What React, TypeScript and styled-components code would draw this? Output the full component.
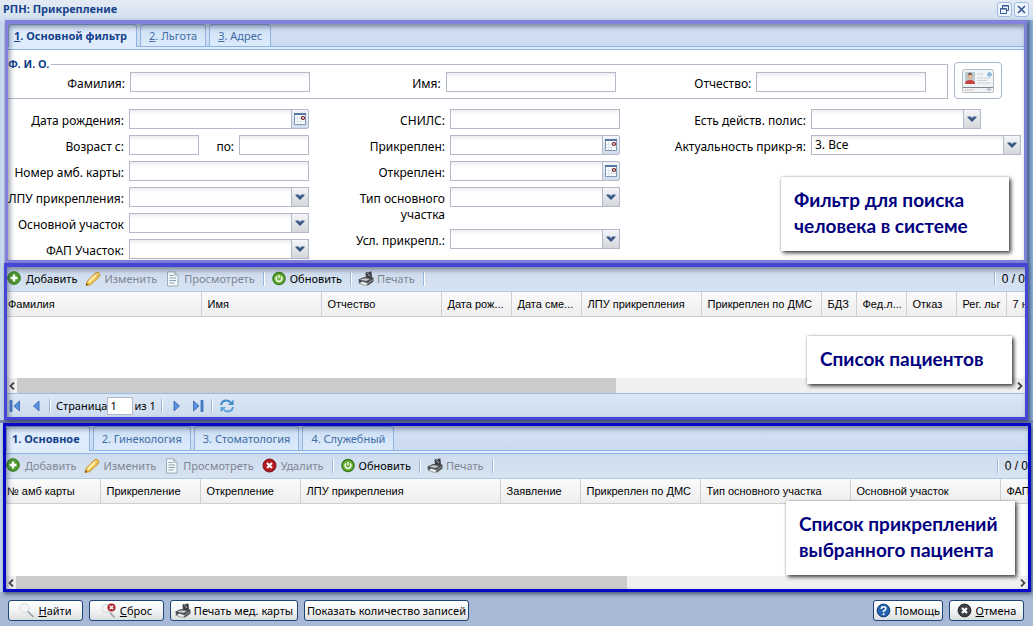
import React, { useId } from 'react';
import styled, { createGlobalStyle } from 'styled-components';

const ui = '"Noto Sans", "DejaVu Sans", sans-serif';
const gridFont = '"Liberation Sans", Arial, sans-serif';

const Global = createGlobalStyle`
  * { box-sizing: border-box; }
  body { margin: 0; font: 11px/16px ${ui}; color: #000; background: #a7b9d6; }
  button, input, select { font: inherit; color: inherit; margin: 0; }
`;

const Window = styled.div`
  min-height: 100vh;
  display: flex;
  flex-direction: column;
  overflow: hidden;
  background: linear-gradient(90deg, #bdd3f0 0, #dbe7f6 4px, #8ea6cc 6px, #8ea6cc calc(100% - 8px), #6f92be calc(100% - 4px), #8fb3dc 100%);
`;

const TitleBar = styled.header`
  height: 20px;
  padding: 0 4px 2px 3px;
  display: flex;
  align-items: center;
  justify-content: space-between;
  background: linear-gradient(#e3eaf4, #dce6f1 50%, #cfdff1);
`;
const Title = styled.h1`
  margin: 0;
  font-size: 11px;
  line-height: 16px;
  font-weight: 700;
  color: #15428b;
`;
const Tools = styled.div`
  display: flex;
  gap: 2px;
`;
const ToolButton = styled.button`
  width: 15px;
  height: 15px;
  padding: 0;
  display: grid;
  place-items: center;
  border: 1px solid #9ebce4;
  border-radius: 3px;
  background: #eef4fc;
`;

const Frame = styled.section<{ $color: string; $left: number; $right: number; $top: number; $grow?: number; $base?: number }>`
  position: relative;
  z-index: 1;
  margin: 0 ${p => p.$right}px 0 ${p => p.$left}px;
  border: 3px solid ${p => p.$color};
  border-top-width: ${p => p.$top}px;
  box-shadow: 1px 2px 4px rgba(30, 40, 70, 0.7);
  background: #fff;
  display: flex;
  flex-direction: column;
  flex: ${p => (p.$grow ? `${p.$grow} 0 ${p.$base}px` : '0 0 auto')};
  &::after {
    content: '';
    position: absolute;
    inset: 0;
    pointer-events: none;
    box-shadow: inset 2px 3px 5px rgba(40, 50, 80, 0.5);
  }
`;
const Gap = styled.div`
  height: 3px;
  background: #7686b4;
`;

const TabStrip = styled.div<{ $h: number }>`
  height: ${p => p.$h}px;
  display: flex;
  gap: 3px;
  align-items: stretch;
  background: linear-gradient(#d5e1f3, #cbdbef);
`;
const Tab = styled.button<{ $active?: boolean }>`
  position: relative;
  border: 1px solid #8db2e3;
  border-bottom: 0;
  border-radius: 4px 4px 0 0;
  background: ${p => (p.$active ? '#deecfd' : 'linear-gradient(#cfe0f5, #dcebfc)')};
  color: ${p => (p.$active ? '#15428b' : '#416da3')};
  font-weight: ${p => (p.$active ? 700 : 400)};
  padding: 0 ${p => (p.$active ? '9px 0 5px' : '8px')};
  margin-bottom: ${p => (p.$active ? '-1px' : '0')};
`;
const TabBase = styled.div`
  height: 4px;
  border: 1px solid #8db2e3;
  border-width: 1px 0;
  background: #deecfd;
`;

const Form = styled.form`
  padding: 7px 0 1px;
`;
const NameRow = styled.div`
  display: flex;
  gap: 6px;
  padding-right: 22px;
`;
const NameSet = styled.fieldset`
  flex: 1;
  min-width: 0;
  margin: 0;
  padding: 1px 0 6px;
  border: 1px solid #b5b8c8;
  border-left: 0;
`;
const Legend = styled.legend`
  padding: 0 2px 0 0;
  line-height: 14px;
  font-weight: 700;
  color: #15428b;
`;
const NameGrid = styled.div`
  display: grid;
  grid-template-columns: 322fr 310fr 308fr;
`;
const CardButton = styled.button`
  width: 48px;
  height: 37px;
  margin-top: 5px;
  padding: 0;
  display: grid;
  place-items: center;
  border: 1px solid #a9b8cc;
  border-radius: 4px;
  background: #fff;
`;
const FilterGrid = styled.div`
  display: grid;
  grid-template-columns: 322fr 310fr 384fr;
  padding-top: 10px;
`;
const FieldColumn = styled.div`
  display: flex;
  flex-direction: column;
  gap: 6px;
`;
const FieldRow = styled.div`
  display: flex;
  gap: 5px;
  align-items: flex-start;
`;
const Label = styled.label<{ $w: number }>`
  flex: 0 0 ${p => p.$w}px;
  padding-top: 4px;
  margin-bottom: -4px;
  font-size: 12px;
  line-height: 16px;
  text-align: right;
`;
const TallLabel = styled(Label)`
  margin-bottom: 0;
  padding-left: 20px;
`;
const Control = styled.div<{ $w: number }>`
  flex: 0 1 ${p => p.$w}px;
  min-width: 0;
  height: 20px;
  display: flex;
  position: relative;
`;
const fieldLook = `
  width: 100%;
  min-width: 0;
  height: 20px;
  padding: 0 3px;
  border: 1px solid #b5b8c8;
  border-radius: 0;
  background: linear-gradient(#eeeeee, #ffffff 5px);
  font-size: 12px;
  outline: 0;
`;
const Input = styled.input`${fieldLook}`;
const SelectBox = styled.select`
  ${fieldLook}
  appearance: none;
`;
const Trigger = styled.span`
  position: absolute;
  right: 0;
  top: 0;
  width: 18px;
  height: 20px;
  display: grid;
  place-items: center;
  border: 1px solid #b5b8c8;
  border-radius: 0 2px 2px 0;
  background: linear-gradient(#f4f6f9, #d3d6da);
  pointer-events: none;
`;
const DateButton = styled.button`
  flex: 0 0 18px;
  height: 20px;
  margin-left: -1px;
  padding: 0;
  display: grid;
  place-items: center;
  border: 1px solid #b5b8c8;
  border-radius: 0 2px 2px 0;
  background: linear-gradient(#f2f5fa, #cfdcec);
`;
const AgeFields = styled.div`
  width: 180px;
  display: grid;
  grid-template-columns: 70px 1fr 70px;
  column-gap: 5px;
`;
const AgeLabel = styled.label`
  padding-top: 4px;
  margin-bottom: -4px;
  font-size: 12px;
  line-height: 16px;
  text-align: right;
`;

const Toolbar = styled.div`
  height: 25px;
  display: flex;
  align-items: center;
  background: linear-gradient(#cfdcee, #d5e3f2);
  border-bottom: 1px solid #b4c8e2;
`;
const ToolItem = styled.button`
  display: flex;
  align-items: center;
  gap: 3px;
  margin-right: 8px;
  padding: 0;
  border: 0;
  background: none;
  white-space: nowrap;
  &:disabled { color: #808692; }
`;
const Separator = styled.span`
  width: 2px;
  height: 14px;
  margin-right: 6px;
  border-left: 1px solid #98b6dc;
  border-right: 1px solid #fff;
`;
const Counter = styled.span`
  margin-left: auto;
  display: flex;
  align-items: center;
  white-space: nowrap;
  font: 12px/16px ${gridFont};
`;

const GridBody = styled.div`
  flex: 1 0 60px;
  overflow: hidden;
`;
const Table = styled.table`
  table-layout: fixed;
  width: 100%;
  min-width: 1200px;
  border-collapse: collapse;
  font: 11px/16px ${gridFont};
`;
const Head = styled.th<{ $w?: number }>`
  width: ${p => (p.$w ? `${p.$w}px` : 'auto')};
  height: 24px;
  padding: 0 0 0 6px;
  overflow: hidden;
  white-space: nowrap;
  text-align: left;
  font-weight: 400;
  background: linear-gradient(#fafafa, #eeeeef);
  border-right: 1px solid #cfd0d4;
  border-bottom: 1px solid #d0d0d0;
  &:first-child { padding-left: 1px; }
`;
const ScrollBar = styled.div<{ $h: number }>`
  height: ${p => p.$h}px;
  display: flex;
  align-items: stretch;
  background: #f0f0f1;
`;
const ScrollButton = styled.button`
  width: 10px;
  padding: 0;
  border: 0;
  background: none;
  display: grid;
  place-items: center;
`;
const Track = styled.div`
  flex: 1;
`;
const Thumb = styled.div<{ $size: number }>`
  width: ${p => p.$size}%;
  height: 100%;
  background: #cbcbcc;
`;
const Paging = styled.nav`
  height: 24px;
  display: flex;
  align-items: center;
  border-top: 1px solid #99bbe8;
  background: linear-gradient(#dce7f4, #cddcee);
`;
const PageButton = styled.button`
  width: 16px;
  height: 16px;
  margin-right: 5px;
  padding: 0;
  border: 0;
  background: none;
  display: grid;
  place-items: center;
`;
const PageText = styled.label`
  margin-left: -1px;
`;
const PageInput = styled.input`
  width: 26px;
  height: 18px;
  padding: 0 2px;
  border: 1px solid #b5b8c8;
  background: #fff;
`;
const PageTotal = styled.span`
  padding: 0 5px 0 1px;
`;

const Footer = styled.footer`
  height: 34px;
  padding: 8px 9px 4px 8px;
  display: flex;
  gap: 6px;
  background: #a7b9d6;
`;
const Action = styled.button<{ $w: number; $push?: boolean }>`
  min-width: ${p => p.$w}px;
  height: 21px;
  padding: 0 2px;
  margin-left: ${p => (p.$push ? 'auto' : '0')};
  display: flex;
  align-items: center;
  justify-content: center;
  gap: 3px;
  border: 1px solid #1d4576;
  border-radius: 3px;
  background: linear-gradient(#ffffff, #f3f4f5 50%, #dcdee1);
  white-space: nowrap;
`;

const Callout = styled.aside<{ $top: number; $right: number; $w: number }>`
  position: absolute;
  z-index: 3;
  top: ${p => p.$top}px;
  right: ${p => p.$right}px;
  width: ${p => p.$w}px;
  padding: 10px 0 12px 13px;
  background: #fff;
  box-shadow: 2px 2px 4px rgba(0, 0, 0, 0.75), 0 0 2px rgba(0, 0, 0, 0.25);
  color: #00007f;
  font-family: Lato, "Noto Sans", sans-serif;
  font-size: 19px;
  line-height: 26px;
  font-weight: 700;
  white-space: nowrap;
`;

/* ---------- icons ---------- */
const AddIcon = () => (
  <svg width="16" height="16" viewBox="0 0 16 16"><circle cx="7" cy="7" r="6.3" fill="#4e9a2c" stroke="#35761c" /><path d="M7 3.5v7M3.5 7h7" stroke="#fff" strokeWidth="2.4" /></svg>
);
const PencilIcon = () => (
  <svg width="16" height="16" viewBox="0 0 16 16"><path d="M1 14.5 2.3 10.200 10.300 2q1.900-1.700 3.700.1t.2 3.600L5.600 13.600Z" fill="#f6c94f" stroke="#c58a2b" /><path d="m4 11 8-8" stroke="#fff0b8" strokeWidth="2" /><path d="m10 2.6 3.4 3.3" stroke="#d79a62" /><path d="m1 14.500.7-2.300 1.700 1.600Z" fill="#6b4c1c" /></svg>
);
const DocIcon = () => (
  <svg width="16" height="16" viewBox="0 0 16 16"><path d="M2.500.8h7.300L13 4v11H2.500Z" fill="#f2f7fa" stroke="#9aaebc" /><path d="M9.800.8V4H13" fill="#c8d8e2" stroke="#9aaebc" /><path d="M4.500 4.500h4M4.500 7h6.500M4.500 9.500h6.500M4.500 12h5" stroke="#87a2b3" /></svg>
);
const RefreshIcon = () => (
  <svg width="16" height="16" viewBox="0 0 16 16"><circle cx="8" cy="7.500" r="6" fill="#6db33a" stroke="#397a1c" strokeWidth="1.500" /><path d="M6 5.500a2.800 2.800 0 1 0 4 0M8 4v3" fill="none" stroke="#fff" strokeWidth="1.300" /></svg>
);
const DeleteIcon = () => (
  <svg width="16" height="16" viewBox="0 0 16 16"><circle cx="7.500" cy="7.500" r="6.500" fill="#b3191e" stroke="#7d1014" /><path d="m5 5 5 5m0-5-5 5" stroke="#fff" strokeWidth="2.200" /></svg>
);
const PrinterIcon = () => (
  <svg width="16" height="16" viewBox="0 0 16 16"><path d="M7.500 1.500 9.500 1l.5 1 1-1.300L13.500.5 14 7 8 8Z" fill="#3e4146" /><path d="M9.500 2.500 12 5" stroke="#b9bcc0" /><path d="M.5 8.500 6 6l9.500.5v4L10 14.500 1 12Z" fill="#484b4f" /><path d="M2 8.800 6 7.300l6 .7-3.500 2.100Z" fill="#c9cbce" /><path d="m.8 12.200 6.700 2.300 3-2.100-6-1.900Z" fill="#f4f4f4" stroke="#77797c" strokeWidth=".7" /><path d="M10.500 11.500 14.500 9" stroke="#a1a4a8" /></svg>
);
const SearchIcon = () => (
  <svg width="16" height="16" viewBox="0 0 16 16"><circle cx="5.500" cy="5" r="4.500" fill="#f5f6f7" stroke="#d3d5d8" /><path d="m8.800 8.500 5.700 5.500" stroke="#9b9ea2" strokeWidth="1.600" /></svg>
);
const ResetIcon = () => (
  <svg width="16" height="16" viewBox="0 0 16 16"><circle cx="5" cy="5.500" r="4" fill="#f5f6f7" stroke="#d0d2d5" /><path d="m9 9.500 4.500 5" stroke="#9b9ea2" strokeWidth="1.800" /><circle cx="10.500" cy="4.500" r="4" fill="#a92228" /><path d="m8.800 2.800 3.400 3.400m0-3.400L8.800 6.200" stroke="#fff" strokeWidth="1.400" /></svg>
);
const HelpIcon = () => (
  <svg width="16" height="16" viewBox="0 0 16 16"><circle cx="7.500" cy="7.500" r="6.400" fill="#2463ae" stroke="#123f7c" /><path d="M5.300 6q0-2.300 2.300-2.300T9.800 5.700Q9.800 7 7.600 8v1.200" fill="none" stroke="#fff" strokeWidth="1.600" /><circle cx="7.600" cy="11.300" r="1" fill="#fff" /></svg>
);
const CancelIcon = () => (
  <svg width="16" height="16" viewBox="0 0 16 16"><circle cx="7.500" cy="7.500" r="6.400" fill="#3d4044" stroke="#222427" /><path d="m5 5 5 5m0-5-5 5" stroke="#fff" strokeWidth="2.200" /></svg>
);
const Chevron = () => (
  <svg width="10" height="8" viewBox="0 0 10 8"><path d="M.5 1.500h3L5 3l1.500-1.500h3v1L5 7 .5 2.500Z" fill="#3d5a86" /></svg>
);
const CalendarIcon = () => (
  <svg width="12" height="12" viewBox="0 0 12 12"><path d="M.5.500h11v11H.5Z" fill="#fff" stroke="#7f95b4" /><path d="M0 1h12" stroke="#56779f" strokeWidth="2" /><path d="M3.500 3v8M6.500 3v8M1 5.500h6M1 8.500h10" stroke="#dde5ef" /><circle cx="9" cy="5" r="1.500" fill="#fff" stroke="#6b1420" strokeWidth="1.200" /></svg>
);
const CardIcon = () => (
  <svg width="32" height="24" viewBox="0 0 32 24"><rect x=".5" y=".5" width="31" height="23" rx="2" fill="#f0f3f5" stroke="#b4bcc3" /><rect x="3" y="3" width="10" height="12" fill="#b9cbd4" /><path d="M3 15q0-4 5-4t5 4Z" fill="#c8433f" /><circle cx="8" cy="7.500" r="3" fill="#dcb79d" /><path d="M5.500 6.500q1-3 2.500-3t2.500 3q-2.500-1.500-5 0Z" fill="#74584a" /><path d="M15 5h6M15 9h13M15 11.500h10M15 14h14" stroke="#ccd3d9" /><path d="M25 5.500h5M27.500 3v5" stroke="#86b4df" strokeWidth="2" /><path d="M1 18.500h30" stroke="#7f878e" /><path d="M3 21h9" stroke="#e3b5b2" /><path d="M25 20.500h4" stroke="#aeb7c0" strokeWidth="2" /></svg>
);
const PageIcon = ({ kind }: { kind: 'first' | 'prev' | 'next' | 'last' }) => {
  const back = kind === 'first' || kind === 'prev';
  const bar = kind === 'first' || kind === 'last';
  return (
    <svg width="14" height="14" viewBox="0 0 14 14">
      <g transform={back ? undefined : 'matrix(-1 0 0 1 14 0)'} fill="#5a92e0" stroke="#2e62ae" strokeWidth=".8">
        {bar && <path d="M2 1.500h2v11H2Z" />}
        <path d={bar ? 'M11.500 2v10L6 7Z' : 'M10 2v10L4.500 7Z'} />
      </g>
    </svg>
  );
};
const ReloadIcon = () => (
  <svg width="16" height="16" viewBox="0 0 16 16"><path d="M2 7Q3 2.500 7.500 2.500q2.500 0 4 2" fill="none" stroke="#3f8ac9" strokeWidth="2" /><path d="M14.500 1.500V7H9Z" fill="#3f8ac9" /><path d="M14 9q-1 4.500-5.500 4.500-2.500 0-4-2" fill="none" stroke="#5aa3da" strokeWidth="2" /><path d="M1.500 14.500V9H7Z" fill="#5aa3da" /></svg>
);
const Arrow = ({ right }: { right?: boolean }) => (
  <svg width="6" height="8" viewBox="0 0 6 8"><path d={right ? 'M1 .5 4.500 4 1 7.500' : 'M5 .5 1.500 4 5 7.500'} fill="none" stroke="#444" strokeWidth="1.800" /></svg>
);

/* ---------- form pieces ---------- */
type FieldProps = { label: string; lw: number; w: number; kind?: 'text' | 'date' | 'select'; value?: string; tall?: boolean };
function Field({ label, lw, w, kind = 'text', value, tall }: FieldProps) {
  const id = useId();
  const L = tall ? TallLabel : Label;
  return (
    <FieldRow>
      <L htmlFor={id} $w={lw}>{label}</L>
      <Control $w={w}>
        {kind === 'select' ? (
          <>
            <SelectBox id={id}><option>{value ?? ''}</option></SelectBox>
            <Trigger><Chevron /></Trigger>
          </>
        ) : <Input id={id} type="text" />}
        {kind === 'date' && <DateButton type="button" aria-label={label}><CalendarIcon /></DateButton>}
      </Control>
    </FieldRow>
  );
}

type Tool = { text: string; icon: React.ReactNode; enabled?: boolean; sep?: boolean };
function GridToolbar({ items }: { items: Tool[] }) {
  return (
    <Toolbar role="toolbar">
      {items.map(t => (
        <React.Fragment key={t.text}>
          <ToolItem type="button" disabled={!t.enabled}>{t.icon}{t.text}</ToolItem>
          {t.sep && <Separator />}
        </React.Fragment>
      ))}
      <Counter><Separator />0 / 0</Counter>
    </Toolbar>
  );
}

function Grid({ columns, thumb, barHeight }: { columns: [string, number?][]; thumb: number; barHeight: number }) {
  return (
    <>
      <GridBody>
        <Table><thead><tr>{columns.map(([name, w]) => <Head key={name} scope="col" $w={w}>{name}</Head>)}</tr></thead></Table>
      </GridBody>
      <ScrollBar $h={barHeight}>
        <ScrollButton type="button" aria-label="Влево"><Arrow /></ScrollButton>
        <Track><Thumb $size={thumb} /></Track>
        <ScrollButton type="button" aria-label="Вправо"><Arrow right /></ScrollButton>
      </ScrollBar>
    </>
  );
}

const patientColumns: [string, number?][] = [
  ['Фамилия', 194], ['Имя', 120], ['Отчество', 120], ['Дата рож...', 70], ['Дата сме...', 70],
  ['ЛПУ прикрепления', 120], ['Прикреплен по ДМС', 120], ['БДЗ', 35], ['Фед.л...', 50], ['Отказ', 50], ['Рег. льг', 50], ['7 но'],
];
const attachColumns: [string, number?][] = [
  ['№ амб карты', 94], ['Прикрепление', 100], ['Открепление', 100], ['ЛПУ прикрепления', 200], ['Заявление', 80],
  ['Прикреплен по ДМС', 120], ['Тип основного участка', 150], ['Основной участок', 150], ['ФАП'],
];

export default function App() {
  return (
    <>
      <Global />
      <Window>
        <TitleBar>
          <Title>РПН: Прикрепление</Title>
          <Tools>
            <ToolButton type="button" aria-label="Восстановить">
              <svg width="11" height="11" viewBox="0 0 11 11"><path d="M3.500 4V1.500h6v5H7.500M3.500 2h6M1.500 4.500h6v5h-6ZM1.500 5h6" fill="none" stroke="#35598f" /></svg>
            </ToolButton>
            <ToolButton type="button" aria-label="Закрыть">
              <svg width="11" height="11" viewBox="0 0 11 11"><path d="m2 2 7 7m0-7-7 7" stroke="#35598f" strokeWidth="1.700" /></svg>
            </ToolButton>
          </Tools>
        </TitleBar>

        <Frame $color="#8282dd" $left={5} $right={6} $top={4}>
          <TabStrip $h={22} role="tablist">
            <Tab type="button" role="tab" aria-selected $active><u>1</u>. Основной фильтр</Tab>
            <Tab type="button" role="tab"><u>2</u>. Льгота</Tab>
            <Tab type="button" role="tab"><u>3</u>. Адрес</Tab>
          </TabStrip>
          <TabBase />
          <Form>
            <NameRow>
              <NameSet>
                <Legend>Ф. И. О.</Legend>
                <NameGrid>
                  <Field label="Фамилия:" lw={117} w={180} />
                  <Field label="Имя:" lw={111} w={170} />
                  <Field label="Отчество:" lw={112} w={170} />
                </NameGrid>
              </NameSet>
              <CardButton type="button" aria-label="Считать карту"><CardIcon /></CardButton>
            </NameRow>
            <FilterGrid>
              <FieldColumn>
                <Field label="Дата рождения:" lw={116} w={180} kind="date" />
                <FieldRow>
                  <Label htmlFor="age-from" $w={116}>Возраст с:</Label>
                  <AgeFields>
                    <Input id="age-from" type="text" />
                    <AgeLabel htmlFor="age-to">по:</AgeLabel>
                    <Input id="age-to" type="text" />
                  </AgeFields>
                </FieldRow>
                <Field label="Номер амб. карты:" lw={116} w={180} />
                <Field label="ЛПУ прикрепления:" lw={116} w={180} kind="select" />
                <Field label="Основной участок" lw={116} w={180} kind="select" />
                <Field label="ФАП Участок:" lw={116} w={180} kind="select" />
              </FieldColumn>
              <FieldColumn>
                <Field label="СНИЛС:" lw={115} w={170} />
                <Field label="Прикреплен:" lw={115} w={170} kind="date" />
                <Field label="Откреплен:" lw={115} w={170} kind="date" />
                <Field label="Тип основного участка" lw={115} w={170} kind="select" tall />
                <Field label="Усл. прикрепл.:" lw={115} w={170} kind="select" />
              </FieldColumn>
              <FieldColumn>
                <Field label="Есть действ. полис:" lw={166} w={170} kind="select" />
                <Field label="Актуальность прикр-я:" lw={166} w={210} kind="select" value="3. Все" />
              </FieldColumn>
            </FilterGrid>
          </Form>
          <Callout $top={153} $right={15} $w={228}>Фильтр для поиска<br />человека в системе</Callout>
        </Frame>

        <Frame $color="#4545d6" $left={4} $right={5} $top={4} $grow={1} $base={157}>
          <GridToolbar items={[
            { text: 'Добавить', icon: <AddIcon />, enabled: true },
            { text: 'Изменить', icon: <PencilIcon /> },
            { text: 'Просмотреть', icon: <DocIcon />, sep: true },
            { text: 'Обновить', icon: <RefreshIcon />, enabled: true, sep: true },
            { text: 'Печать', icon: <PrinterIcon />, sep: true },
          ]} />
          <Grid columns={patientColumns} thumb={60} barHeight={15} />
          <Paging>
            <PageButton type="button" aria-label="Первая"><PageIcon kind="first" /></PageButton>
            <PageButton type="button" aria-label="Предыдущая"><PageIcon kind="prev" /></PageButton>
            <Separator />
            <PageText htmlFor="page">Страница</PageText>
            <PageInput id="page" type="text" defaultValue="1" />
            <PageTotal>из 1</PageTotal>
            <Separator />
            <PageButton type="button" aria-label="Следующая"><PageIcon kind="next" /></PageButton>
            <PageButton type="button" aria-label="Последняя"><PageIcon kind="last" /></PageButton>
            <Separator />
            <PageButton type="button" aria-label="Обновить"><ReloadIcon /></PageButton>
          </Paging>
          <Callout $top={69} $right={13} $w={205}>Список пациентов</Callout>
        </Frame>
        <Gap />

        <Frame $color="#0707c6" $left={3} $right={2} $top={3} $grow={1} $base={169}>
          <TabStrip $h={24} role="tablist">
            <Tab type="button" role="tab" aria-selected $active>1. Основное</Tab>
            <Tab type="button" role="tab">2. Гинекология</Tab>
            <Tab type="button" role="tab">3. Стоматология</Tab>
            <Tab type="button" role="tab">4. Служебный</Tab>
          </TabStrip>
          <TabBase />
          <GridToolbar items={[
            { text: 'Добавить', icon: <AddIcon /> },
            { text: 'Изменить', icon: <PencilIcon /> },
            { text: 'Просмотреть', icon: <DocIcon /> },
            { text: 'Удалить', icon: <DeleteIcon />, sep: true },
            { text: 'Обновить', icon: <RefreshIcon />, enabled: true, sep: true },
            { text: 'Печать', icon: <PrinterIcon />, sep: true },
          ]} />
          <Grid columns={attachColumns} thumb={61} barHeight={13} />
          <Callout $top={75} $right={13} $w={229}>Список прикреплений<br />выбранного пациента</Callout>
        </Frame>

        <Footer>
          <Action type="button" $w={75}><SearchIcon /><span><u>Н</u>айти</span></Action>
          <Action type="button" $w={75}><ResetIcon /><span><u>С</u>брос</span></Action>
          <Action type="button" $w={128}><PrinterIcon />Печать мед. карты</Action>
          <Action type="button" $w={165}>Показать количество записей</Action>
          <Action type="button" $w={70} $push><HelpIcon />Помощь</Action>
          <Action type="button" $w={75}><CancelIcon /><span><u>О</u>тмена</span></Action>
        </Footer>
      </Window>
    </>
  );
}
